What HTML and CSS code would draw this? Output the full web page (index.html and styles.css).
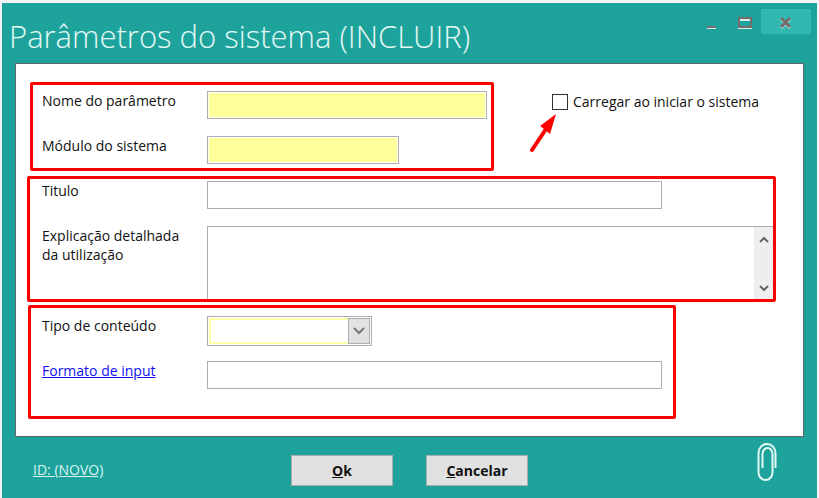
FILE: index.html
```html
<!DOCTYPE html>
<html lang="pt">
<head>
    <meta charset="UTF-8">
    <meta name="viewport" content="width=device-width, initial-scale=1.0">
    <title>Parâmetros do sistema</title>
    <link rel="stylesheet" href="styles.css">
</head>
<body>
    <form class="window">
        <header>
            <h1>Parâmetros do sistema (INCLUIR)</h1>
            <div class="controls">
                <button type="button" aria-label="Minimizar">
                    <svg width="14" height="16"><path class="light" d="M2 13h9v1H2z"/><path class="dark" d="M2 11h9v2H2z"/></svg>
                </button>
                <button type="button" aria-label="Maximizar">
                    <svg width="14" height="16"><path class="light" d="M0 13h14v1H0zM2 4h10v2H2z"/><path class="dark" fill-rule="evenodd" d="M0 2h14v11H0zM2 4v7h10V4z"/></svg>
                </button>
                <button type="button" class="close" aria-label="Fechar">
                    <svg width="14" height="16"><path class="light-line" d="M2 4l9 9M11 4l-9 9"/><path class="dark-line" d="M2 3l9 9M11 3l-9 9"/></svg>
                </button>
            </div>
        </header>

        <main class="panel">
            <div class="top">
                <section class="group names">
                    <div class="row">
                        <label for="nome">Nome do parâmetro</label>
                        <input type="text" id="nome" class="required">
                    </div>
                    <div class="row">
                        <label for="modulo">Módulo do sistema</label>
                        <input type="text" id="modulo" class="required short">
                    </div>
                </section>
                <div class="startup">
                    <input type="checkbox" id="carregar">
                    <label for="carregar">Carregar ao iniciar o sistema</label>
                    <svg class="arrow" width="28" height="40" viewBox="0 0 28 40"><path d="M3 36L17 15" stroke="#f00" stroke-width="4" stroke-linecap="round"/><path d="M27 0L11 12l4 3 6 5z" fill="#f00"/></svg>
                </div>
            </div>

            <section class="group texts">
                <div class="row">
                    <label for="titulo">Titulo</label>
                    <input type="text" id="titulo" class="long">
                </div>
                <div class="row">
                    <label for="explicacao">Explicação detalhada<br>da utilização</label>
                    <div class="area">
                        <textarea id="explicacao"></textarea>
                        <div class="scroll">
                            <svg width="10" height="8"><path d="M1 6l4-4 4 4"/></svg>
                            <svg width="10" height="8"><path d="M1 1l4 4 4-4"/></svg>
                        </div>
                    </div>
                </div>
            </section>

            <section class="group content">
                <div class="row">
                    <label for="tipo">Tipo de conteúdo</label>
                    <div class="combo">
                        <select id="tipo"><option></option></select>
                        <span class="combo-arrow"><svg width="12" height="8"><path d="M1 1l5 5 5-5"/></svg></span>
                    </div>
                </div>
                <div class="row">
                    <a href="#" id="formato-label">Formato de input</a>
                    <input type="text" class="long" aria-labelledby="formato-label">
                </div>
            </section>
        </main>

        <footer>
            <a href="#">ID: (NOVO)</a>
            <div class="buttons">
                <button type="button"><u>O</u>k</button>
                <button type="button"><u>C</u>ancelar</button>
            </div>
            <svg class="clip" width="20" height="40" viewBox="0 0 20 40"><path d="M18.500 26V11A8.500 9 0 0 0 1.500 11V30.500A7 7.500 0 0 0 15.500 30.500V12A5 6 0 0 0 5.500 12V26"/></svg>
        </footer>
    </form>
</body>
</html>
```
FILE: styles.css
```css
* {
    box-sizing: border-box;
}
body {
    margin: 0;
    background: #eeeeee;
    font-family: "Open Sans", "Noto Sans", sans-serif;
    font-size: 14px;
    line-height: 19px;
    color: #111;
}
.window {
    min-height: 100vh;
    border: 2px solid #f4f4f4;
    border-top-width: 3px;
    border-bottom: none;
    background: #1ea39c;
}
header {
    display: flex;
    justify-content: space-between;
    height: 60px;
    padding: 6px 6px 0 7px;
}
h1 {
    margin: 5px 0 0;
    font-size: 31px;
    font-weight: 300;
    line-height: 44px;
    color: #e4f8f5;
    white-space: nowrap;
}
.controls {
    display: flex;
    height: 25px;
}
.controls button {
    width: 33px;
    padding: 2px 0 0;
    border: none;
    background: none;
}
.controls svg {
    display: block;
    margin: 0 auto;
}
.controls .close {
    width: 50px;
    background: #31b8b0;
}
.light {
    fill: #d5eeeb;
}
.dark {
    fill: #776c6c;
}
.light-line, .dark-line {
    fill: none;
    stroke: #b5dedb;
    stroke-width: 3;
}
.dark-line {
    stroke: #776c6c;
}
.panel {
    margin: 0 13px;
    padding: 18px 27px 17px 11px;
    border: 1px solid #666;
    background: #fff;
}
.top {
    display: flex;
}
.group {
    display: flex;
    flex-direction: column;
    gap: 17px;
    border: 3px solid #f00;
    border-radius: 2px;
}
.names {
    flex: 0 1 464px;
    margin-left: 3px;
    padding: 6px 4px 4px 9px;
}
.texts {
    margin-top: 5px;
    padding: 2px 0 0 12px;
}
.content {
    max-width: 648px;
    margin: 3px 0 0 1px;
    gap: 15px;
    padding: 8px 11px 27px;
}
.row {
    display: grid;
    grid-template-columns: 165px 1fr;
    align-items: start;
}
input[type="text"], textarea, select {
    display: block;
    width: 100%;
    height: 28px;
    margin: 0;
    padding: 2px 4px;
    border: 1px solid #adadb3;
    border-radius: 0;
    background: #fff;
    font: inherit;
}
input.required {
    background: #ffff99;
    box-shadow: inset 0 0 0 1px #fff;
}
input.short {
    max-width: 192px;
}
input.long {
    max-width: 455px;
}
.startup {
    position: relative;
    display: flex;
    align-items: center;
    gap: 5px;
    height: 19px;
    margin: 10px 0 0 58px;
    white-space: nowrap;
}
.startup input {
    appearance: none;
    width: 16px;
    height: 16px;
    margin: 0;
    border: 1px solid #333;
    background: #fff;
}
.arrow {
    position: absolute;
    top: 22px;
    left: -23px;
}
.area, .combo {
    position: relative;
}
textarea {
    height: 73px;
    border-right: none;
    border-bottom: none;
    resize: none;
    overflow: hidden;
}
.scroll {
    position: absolute;
    top: 1px;
    right: 0;
    bottom: 0;
    display: flex;
    flex-direction: column;
    justify-content: space-between;
    align-items: center;
    width: 19px;
    padding: 9px 0 6px;
    background: #eee;
}
.scroll path {
    fill: none;
    stroke: #666;
    stroke-width: 2;
}
.combo {
    width: 165px;
}
select {
    appearance: none;
    height: 30px;
    box-shadow: inset 0 0 0 1px #fff, inset 0 0 0 3px #ffffa6;
}
.combo-arrow {
    position: absolute;
    top: 2px;
    right: 2px;
    bottom: 2px;
    display: flex;
    align-items: center;
    justify-content: center;
    width: 22px;
    border: 1px solid #adadad;
    background: #e1e1e1;
    pointer-events: none;
}
.combo-arrow path {
    fill: none;
    stroke: #777;
    stroke-width: 2;
}
.row a {
    color: #1010f0;
}
footer {
    display: grid;
    grid-template-columns: 1fr auto 1fr;
    align-items: center;
    padding: 5px 40px 0 31px;
}
footer a {
    color: #d9f3f0;
}
.buttons {
    display: flex;
    gap: 33px;
    padding: 13px 0 11px 9px;
}
.buttons button {
    width: 102px;
    height: 31px;
    padding: 0;
    border: 1px solid #adadad;
    background: #e1e1e1;
    font: inherit;
    font-weight: bold;
    color: #111;
}
.clip {
    justify-self: end;
    align-self: start;
}
.clip path {
    fill: none;
    stroke: #e4f8f5;
    stroke-width: 2;
}
```
